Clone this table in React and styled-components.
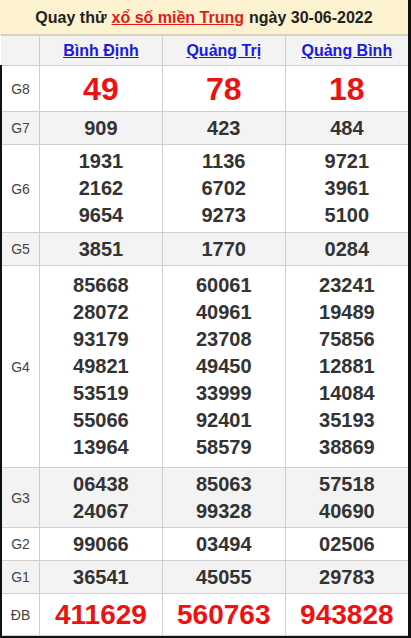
import React from 'react'
import styled, { createGlobalStyle } from 'styled-components'

const GlobalStyle = createGlobalStyle`
  body {
    margin: 0;
    background: #fff;
    font-family: "Liberation Sans", Arial, sans-serif;
  }
`

const Board = styled.div`
  width: 408px;
  border-right: 3px solid #111;
  border-bottom: 2px solid #111;
`

const Title = styled.div`
  height: 35px;
  background: #fcf2cf;
  border-bottom: 1px solid #d9d2b8;
  display: flex;
  align-items: center;
  justify-content: center;
  font-size: 16px;
  font-weight: bold;
  color: #222;
  box-sizing: border-box;
  padding-top: 1px;
`

const TitleLink = styled.a`
  color: #e21a1a;
  text-decoration: underline;
  margin: 0 5px;
`

const Table = styled.table`
  width: 100%;
  border-collapse: collapse;
  table-layout: fixed;
`

const Row = styled.tr`
  background: ${props => props.shade ? '#f3f3f3' : '#fff'};
`

const Label = styled.td`
  width: 38px;
  border: 1px solid #cfcfcf;
  border-left: ${props => props.edge ? '2px solid #111' : '0'};
  font-size: 14px;
  color: #444;
  text-align: center;
  padding: 0;
`

const Cell = styled.td`
  border: 1px solid #cfcfcf;
  text-align: center;
  padding: ${props => props.pad || '2.5px'} 0;
  &:last-child { border-right: 0; }
`

const Province = styled.a`
  color: #1a1ae0;
  font-size: 16px;
  font-weight: bold;
  text-decoration: underline;
`

const Num = styled.div`
  font-weight: bold;
  font-size: ${props => props.size || 20}px;
  line-height: ${props => props.lh || 27}px;
  color: ${props => props.red ? '#ee1111' : '#333'};
`

const provinces = ['Bình Định', 'Quảng Trị', 'Quảng Bình']

const rows = [
  { label: 'G8', red: true, size: 32, lh: 38, pad: '3.5px', data: [['49'], ['78'], ['18']] },
  { label: 'G7', shade: true, data: [['909'], ['423'], ['484']] },
  { label: 'G6', pad: '3px', data: [['1931', '2162', '9654'], ['1136', '6702', '9273'], ['9721', '3961', '5100']] },
  { label: 'G5', shade: true, data: [['3851'], ['1770'], ['0284']] },
  {
    label: 'G4', pad: '6px', data: [
      ['85668', '28072', '93179', '49821', '53519', '55066', '13964'],
      ['60061', '40961', '23708', '49450', '33999', '92401', '58579'],
      ['23241', '19489', '75856', '12881', '14084', '35193', '38869'],
    ],
  },
  { label: 'G3', shade: true, data: [['06438', '24067'], ['85063', '99328'], ['57518', '40690']] },
  { label: 'G2', data: [['99066'], ['03494'], ['02506']] },
  { label: 'G1', shade: true, data: [['36541'], ['45055'], ['29783']] },
  { label: 'ĐB', red: true, size: 28, lh: 34, pad: '3.5px', data: [['411629'], ['560763'], ['943828']] },
]

export default function App() {
  return (
    <>
      <GlobalStyle />
      <Board>
        <Title>
          Quay thử<TitleLink href="#">xổ số miền Trung</TitleLink>ngày 30-06-2022
        </Title>
        <Table>
          <tbody>
            <Row shade>
              <Label />
              {provinces.map(p => (
                <Cell key={p} pad="5.5px">
                  <Province href="#">{p}</Province>
                </Cell>
              ))}
            </Row>
            {rows.map(r => (
              <Row key={r.label} shade={r.shade}>
                <Label edge>{r.label}</Label>
                {r.data.map((col, i) => (
                  <Cell key={i} pad={r.pad}>
                    {col.map(n => (
                      <Num key={n} red={r.red} size={r.size} lh={r.lh}>{n}</Num>
                    ))}
                  </Cell>
                ))}
              </Row>
            ))}
          </tbody>
        </Table>
      </Board>
    </>
  )
}
